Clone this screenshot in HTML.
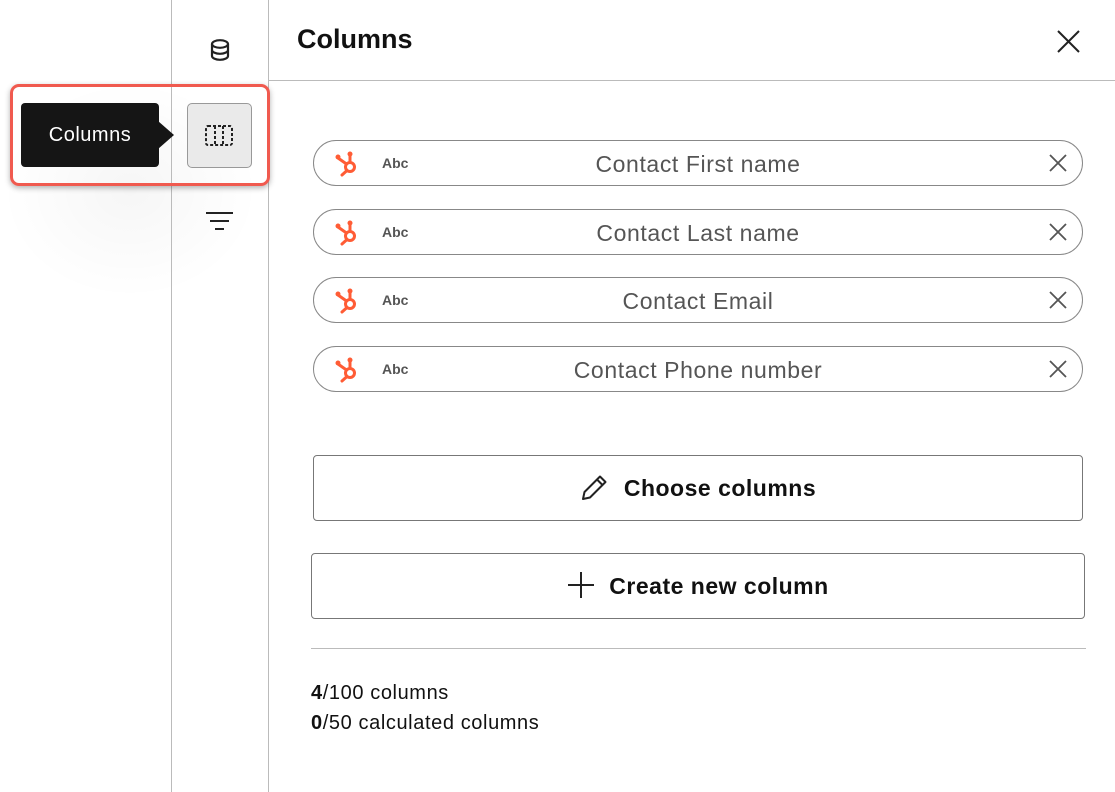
<!DOCTYPE html>
<html><head><style>
body{margin:0;width:1115px;height:792px;background:#fff;font-family:"Liberation Sans",sans-serif;position:relative;overflow:hidden;color:#111}
.a{position:absolute}
.pill{position:absolute;left:313px;width:768px;height:44px;border:1.5px solid #888;border-radius:24px;background:#fff}
.pill .t{position:absolute;left:0;right:0;top:10px;text-align:center;font-size:23px;color:#555;letter-spacing:0.6px}
.pill .abc{position:absolute;left:68px;top:14px;font-size:14px;font-weight:bold;color:#555}
.pill svg.h{position:absolute;left:20px;top:9px}
.pill svg.x{position:absolute;right:15px;top:13px}
.btn{position:absolute;border:1.5px solid #777;border-radius:4px;background:#fff;font-weight:bold;font-size:23px;text-align:center;letter-spacing:0.5px}
</style></head><body>
<div class="a" style="left:0;top:80px;width:260px;height:220px;background:radial-gradient(ellipse at center,rgba(0,0,0,0.035),rgba(0,0,0,0) 70%)"></div>
<div class="a" style="left:171px;top:0;width:1px;height:792px;background:#bbb"></div>
<div class="a" style="left:268px;top:0;width:1px;height:792px;background:#bbb"></div>
<div class="a" style="left:269px;top:80px;width:846px;height:1px;background:#bbb"></div>
<div class="a" style="left:297px;top:24px;font-size:27px;font-weight:bold">Columns</div>
<svg class="a" style="left:1056px;top:29px" width="25" height="25"><path d="M2 2L23 23M23 2L2 23" stroke="#222" stroke-width="2"/></svg>
<svg class="a" style="left:209px;top:38px" width="22" height="24"><ellipse cx="11" cy="6" rx="8" ry="3.8" fill="none" stroke="#222" stroke-width="2.2"/><path d="M3 6v12c0 2 3.5 3.8 8 3.8s8-1.8 8-3.8V6M3 12c0 2 3.5 3.8 8 3.8s8-1.8 8-3.8" fill="none" stroke="#222" stroke-width="2.2"/></svg>
<svg class="a" style="left:205px;top:210px" width="30" height="24"><path d="M1 3h27M5 11h19M10 19h9" stroke="#222" stroke-width="2"/></svg>
<div class="a" style="left:10px;top:84px;width:254px;height:96px;border:3px solid #f05a4f;border-radius:9px;box-shadow:0 2px 6px rgba(0,0,0,.3)"></div>
<div class="a" style="left:21px;top:103px;width:138px;height:64px;background:#151515;border-radius:4px;color:#fff;font-size:20px;line-height:64px;text-align:center;letter-spacing:0.5px">Columns</div>
<div class="a" style="left:158px;top:121px;width:0;height:0;border-top:14px solid transparent;border-bottom:14px solid transparent;border-left:16px solid #151515"></div>
<div class="a" style="left:187px;top:103px;width:63px;height:63px;background:#eaeaea;border:1px solid #999;border-radius:5px"></div>
<svg class="a" style="left:205px;top:125px" width="28" height="22"><rect x="1" y="1" width="26" height="19" rx="2" fill="none" stroke="#222" stroke-width="2" stroke-dasharray="3 2"/><path d="M10 1v19M18 1v19" stroke="#222" stroke-width="2" stroke-dasharray="3 2"/></svg>

<div class="pill" style="top:140px"><svg class="h" width="28" height="28" viewBox="0 0 28 28"><g stroke="#ff5c35" stroke-width="3" fill="none" stroke-linecap="round"><circle cx="16" cy="17" r="4.5"/><path d="M16 5v7.5M12.5 14L4 8M13 20.5L8 25"/></g><circle cx="16" cy="4" r="2.5" fill="#ff5c35"/><circle cx="4" cy="7" r="2.5" fill="#ff5c35"/></svg><span class="abc">Abc</span><div class="t">Contact First name</div><svg class="x" width="18" height="18"><path d="M1 1L17 17M17 1L1 17" stroke="#555" stroke-width="1.8"/></svg></div>
<div class="pill" style="top:209px"><svg class="h" width="28" height="28" viewBox="0 0 28 28"><g stroke="#ff5c35" stroke-width="3" fill="none" stroke-linecap="round"><circle cx="16" cy="17" r="4.5"/><path d="M16 5v7.5M12.5 14L4 8M13 20.5L8 25"/></g><circle cx="16" cy="4" r="2.5" fill="#ff5c35"/><circle cx="4" cy="7" r="2.5" fill="#ff5c35"/></svg><span class="abc">Abc</span><div class="t">Contact Last name</div><svg class="x" width="18" height="18"><path d="M1 1L17 17M17 1L1 17" stroke="#555" stroke-width="1.8"/></svg></div>
<div class="pill" style="top:277px"><svg class="h" width="28" height="28" viewBox="0 0 28 28"><g stroke="#ff5c35" stroke-width="3" fill="none" stroke-linecap="round"><circle cx="16" cy="17" r="4.5"/><path d="M16 5v7.5M12.5 14L4 8M13 20.5L8 25"/></g><circle cx="16" cy="4" r="2.5" fill="#ff5c35"/><circle cx="4" cy="7" r="2.5" fill="#ff5c35"/></svg><span class="abc">Abc</span><div class="t">Contact Email</div><svg class="x" width="18" height="18"><path d="M1 1L17 17M17 1L1 17" stroke="#555" stroke-width="1.8"/></svg></div>
<div class="pill" style="top:346px"><svg class="h" width="28" height="28" viewBox="0 0 28 28"><g stroke="#ff5c35" stroke-width="3" fill="none" stroke-linecap="round"><circle cx="16" cy="17" r="4.5"/><path d="M16 5v7.5M12.5 14L4 8M13 20.5L8 25"/></g><circle cx="16" cy="4" r="2.5" fill="#ff5c35"/><circle cx="4" cy="7" r="2.5" fill="#ff5c35"/></svg><span class="abc">Abc</span><div class="t">Contact Phone number</div><svg class="x" width="18" height="18"><path d="M1 1L17 17M17 1L1 17" stroke="#555" stroke-width="1.8"/></svg></div>

<div class="btn" style="left:313px;top:455px;width:768px;height:64px;line-height:64px"><svg style="vertical-align:-6px;margin-right:14px" width="30" height="30"><path d="M3 27l1.5-7L20 4.5l5.5 5.5L10 25.5zM17 7.5l5.5 5.5" fill="none" stroke="#222" stroke-width="2" stroke-linejoin="round"/></svg>Choose columns</div>
<div class="btn" style="left:311px;top:553px;width:772px;height:64px;line-height:64px"><svg style="vertical-align:-5px;margin-right:14px" width="28" height="28"><path d="M14 1v26M1 14h26" stroke="#222" stroke-width="2"/></svg>Create new column</div>
<div class="a" style="left:311px;top:648px;width:775px;height:1px;background:#bbb"></div>
<div class="a" style="left:311px;top:682px;font-size:20px;letter-spacing:0.6px"><b>4</b>/100 columns</div>
<div class="a" style="left:311px;top:712px;font-size:20px;letter-spacing:0.6px"><b>0</b>/50 calculated columns</div>
</body></html>
